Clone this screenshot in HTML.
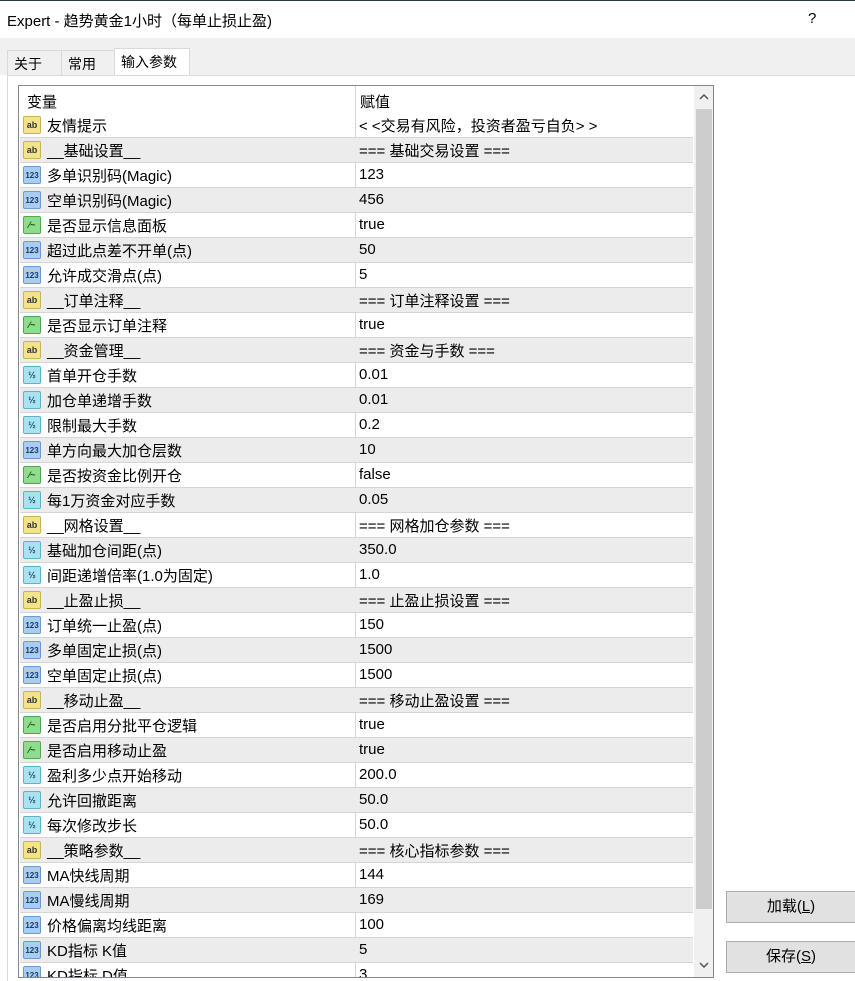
<!DOCTYPE html>
<html><head><meta charset="utf-8"><style>
*{margin:0;padding:0;box-sizing:border-box}
body{width:855px;height:981px;overflow:hidden;background:#fff;font-family:"Liberation Sans","Noto Sans CJK SC",sans-serif;font-size:15px;color:#000;position:relative}
.title{position:absolute;left:0;top:0;width:855px;height:38px;background:#fff;border-top:1px solid #2b3a42}
.title span{position:absolute;left:7px;top:9px;font-size:15px}
.title b{position:absolute;left:808px;top:9px;font-weight:normal;font-size:15px}
.strip{position:absolute;left:0;top:38px;width:855px;height:37px;background:#f0f0f0}
.tab{position:absolute;top:12px;height:26px;border:1px solid #d9d9d9;border-bottom:none;background:#f0f0f0;font-size:14px;padding:3px 0 0 6px}
.panel{position:absolute;left:7px;top:75px;width:848px;height:906px;background:#fff;border-left:1px solid #d9d9d9;border-top:1px solid #d9d9d9}
.list{position:absolute;left:18px;top:85px;width:696px;height:893px;border:1px solid #828790;overflow:hidden;background:#fff}
.hdr{position:absolute;left:0;top:0;width:675px;height:27px}
.hdr span{position:absolute;top:5px}
.row{position:absolute;left:1px;width:673px;height:25px;border-bottom:1px solid #d6d6d6}
.row.g{background:#ececec}
.row .n{position:absolute;left:27px;top:2px;white-space:nowrap}
.row .v{position:absolute;left:339px;top:3px;white-space:nowrap}
.vl{position:absolute;left:336px;top:0;width:1px;height:893px;background:#d6d6d6}
.ic{position:absolute;left:3px;top:3px;width:18px;height:18px;border-radius:2px;font-size:9px;font-weight:bold;text-align:center;line-height:17px;font-style:normal}
.ab{background:#f3e48a;border:1px solid #c8b452;color:#333}
.nm{background:#a8cdf0;border:1px solid #6a9bd0;color:#1a3c6a;font-size:8px}
.bo{background:#8fdc8f;border:1px solid #52a852;color:#105010}
.db{background:#a8e4f0;border:1px solid #5cb4cc;color:#1a4a66;font-size:9px}
.sb{position:absolute;left:675px;top:0;width:19px;height:891px;background:#f0f0f0}
.thumb{position:absolute;left:2px;top:23px;width:16px;height:800px;background:#cdcdcd}
.btn{position:absolute;left:726px;width:130px;height:32px;background:#e1e1e1;border:1px solid #adadad;text-align:center;line-height:30px;font-size:15px}
</style></head><body>
<div class="title"><span>Expert - 趋势黄金1小时（每单止损止盈)</span><b>?</b></div>
<div class="strip">
<div class="tab" style="left:7px;width:55px">关于</div>
<div class="tab" style="left:61px;width:54px">常用</div>
<div class="tab" style="left:114px;top:10px;height:28px;width:76px;background:#fff">输入参数</div>
</div>
<div class="panel"></div>
<div class="list">
<div class="hdr"><span style="left:8px">变量</span><span style="left:341px">赋值</span></div>
<div class="vl"></div>
<div class="row" style="top:27px"><i class="ic ab">ab</i><span class="n">友情提示</span><span class="v" style="top:2px">&lt; &lt;交易有风险，投资者盈亏自负&gt; &gt;</span></div>
<div class="row g" style="top:52px"><i class="ic ab">ab</i><span class="n">__基础设置__</span><span class="v" style="top:2px">=== 基础交易设置 ===</span></div>
<div class="row" style="top:77px"><i class="ic nm">123</i><span class="n">多单识别码(Magic)</span><span class="v">123</span></div>
<div class="row g" style="top:102px"><i class="ic nm">123</i><span class="n">空单识别码(Magic)</span><span class="v">456</span></div>
<div class="row" style="top:127px"><i class="ic bo">⁄~</i><span class="n">是否显示信息面板</span><span class="v">true</span></div>
<div class="row g" style="top:152px"><i class="ic nm">123</i><span class="n">超过此点差不开单(点)</span><span class="v">50</span></div>
<div class="row" style="top:177px"><i class="ic nm">123</i><span class="n">允许成交滑点(点)</span><span class="v">5</span></div>
<div class="row g" style="top:202px"><i class="ic ab">ab</i><span class="n">__订单注释__</span><span class="v" style="top:2px">=== 订单注释设置 ===</span></div>
<div class="row" style="top:227px"><i class="ic bo">⁄~</i><span class="n">是否显示订单注释</span><span class="v">true</span></div>
<div class="row g" style="top:252px"><i class="ic ab">ab</i><span class="n">__资金管理__</span><span class="v" style="top:2px">=== 资金与手数 ===</span></div>
<div class="row" style="top:277px"><i class="ic db">½</i><span class="n">首单开仓手数</span><span class="v">0.01</span></div>
<div class="row g" style="top:302px"><i class="ic db">½</i><span class="n">加仓单递增手数</span><span class="v">0.01</span></div>
<div class="row" style="top:327px"><i class="ic db">½</i><span class="n">限制最大手数</span><span class="v">0.2</span></div>
<div class="row g" style="top:352px"><i class="ic nm">123</i><span class="n">单方向最大加仓层数</span><span class="v">10</span></div>
<div class="row" style="top:377px"><i class="ic bo">⁄~</i><span class="n">是否按资金比例开仓</span><span class="v">false</span></div>
<div class="row g" style="top:402px"><i class="ic db">½</i><span class="n">每1万资金对应手数</span><span class="v">0.05</span></div>
<div class="row" style="top:427px"><i class="ic ab">ab</i><span class="n">__网格设置__</span><span class="v" style="top:2px">=== 网格加仓参数 ===</span></div>
<div class="row g" style="top:452px"><i class="ic db">½</i><span class="n">基础加仓间距(点)</span><span class="v">350.0</span></div>
<div class="row" style="top:477px"><i class="ic db">½</i><span class="n">间距递增倍率(1.0为固定)</span><span class="v">1.0</span></div>
<div class="row g" style="top:502px"><i class="ic ab">ab</i><span class="n">__止盈止损__</span><span class="v" style="top:2px">=== 止盈止损设置 ===</span></div>
<div class="row" style="top:527px"><i class="ic nm">123</i><span class="n">订单统一止盈(点)</span><span class="v">150</span></div>
<div class="row g" style="top:552px"><i class="ic nm">123</i><span class="n">多单固定止损(点)</span><span class="v">1500</span></div>
<div class="row" style="top:577px"><i class="ic nm">123</i><span class="n">空单固定止损(点)</span><span class="v">1500</span></div>
<div class="row g" style="top:602px"><i class="ic ab">ab</i><span class="n">__移动止盈__</span><span class="v" style="top:2px">=== 移动止盈设置 ===</span></div>
<div class="row" style="top:627px"><i class="ic bo">⁄~</i><span class="n">是否启用分批平仓逻辑</span><span class="v">true</span></div>
<div class="row g" style="top:652px"><i class="ic bo">⁄~</i><span class="n">是否启用移动止盈</span><span class="v">true</span></div>
<div class="row" style="top:677px"><i class="ic db">½</i><span class="n">盈利多少点开始移动</span><span class="v">200.0</span></div>
<div class="row g" style="top:702px"><i class="ic db">½</i><span class="n">允许回撤距离</span><span class="v">50.0</span></div>
<div class="row" style="top:727px"><i class="ic db">½</i><span class="n">每次修改步长</span><span class="v">50.0</span></div>
<div class="row g" style="top:752px"><i class="ic ab">ab</i><span class="n">__策略参数__</span><span class="v" style="top:2px">=== 核心指标参数 ===</span></div>
<div class="row" style="top:777px"><i class="ic nm">123</i><span class="n">MA快线周期</span><span class="v">144</span></div>
<div class="row g" style="top:802px"><i class="ic nm">123</i><span class="n">MA慢线周期</span><span class="v">169</span></div>
<div class="row" style="top:827px"><i class="ic nm">123</i><span class="n">价格偏离均线距离</span><span class="v">100</span></div>
<div class="row g" style="top:852px"><i class="ic nm">123</i><span class="n">KD指标 K值</span><span class="v">5</span></div>
<div class="row" style="top:877px"><i class="ic nm">123</i><span class="n">KD指标 D值</span><span class="v">3</span></div>
<div class="sb"><div class="thumb"></div>
<svg style="position:absolute;left:5px;top:8px" width="10" height="6"><path d="M1 5L5 1L9 5" stroke="#555" stroke-width="1.5" fill="none"/></svg>
<svg style="position:absolute;left:5px;top:876px" width="10" height="6"><path d="M1 1L5 5L9 1" stroke="#555" stroke-width="1.5" fill="none"/></svg>
</div>
</div>
<div class="btn" style="top:891px">加载(<u>L</u>)</div>
<div class="btn" style="top:941px">保存(<u>S</u>)</div>
</body></html>
